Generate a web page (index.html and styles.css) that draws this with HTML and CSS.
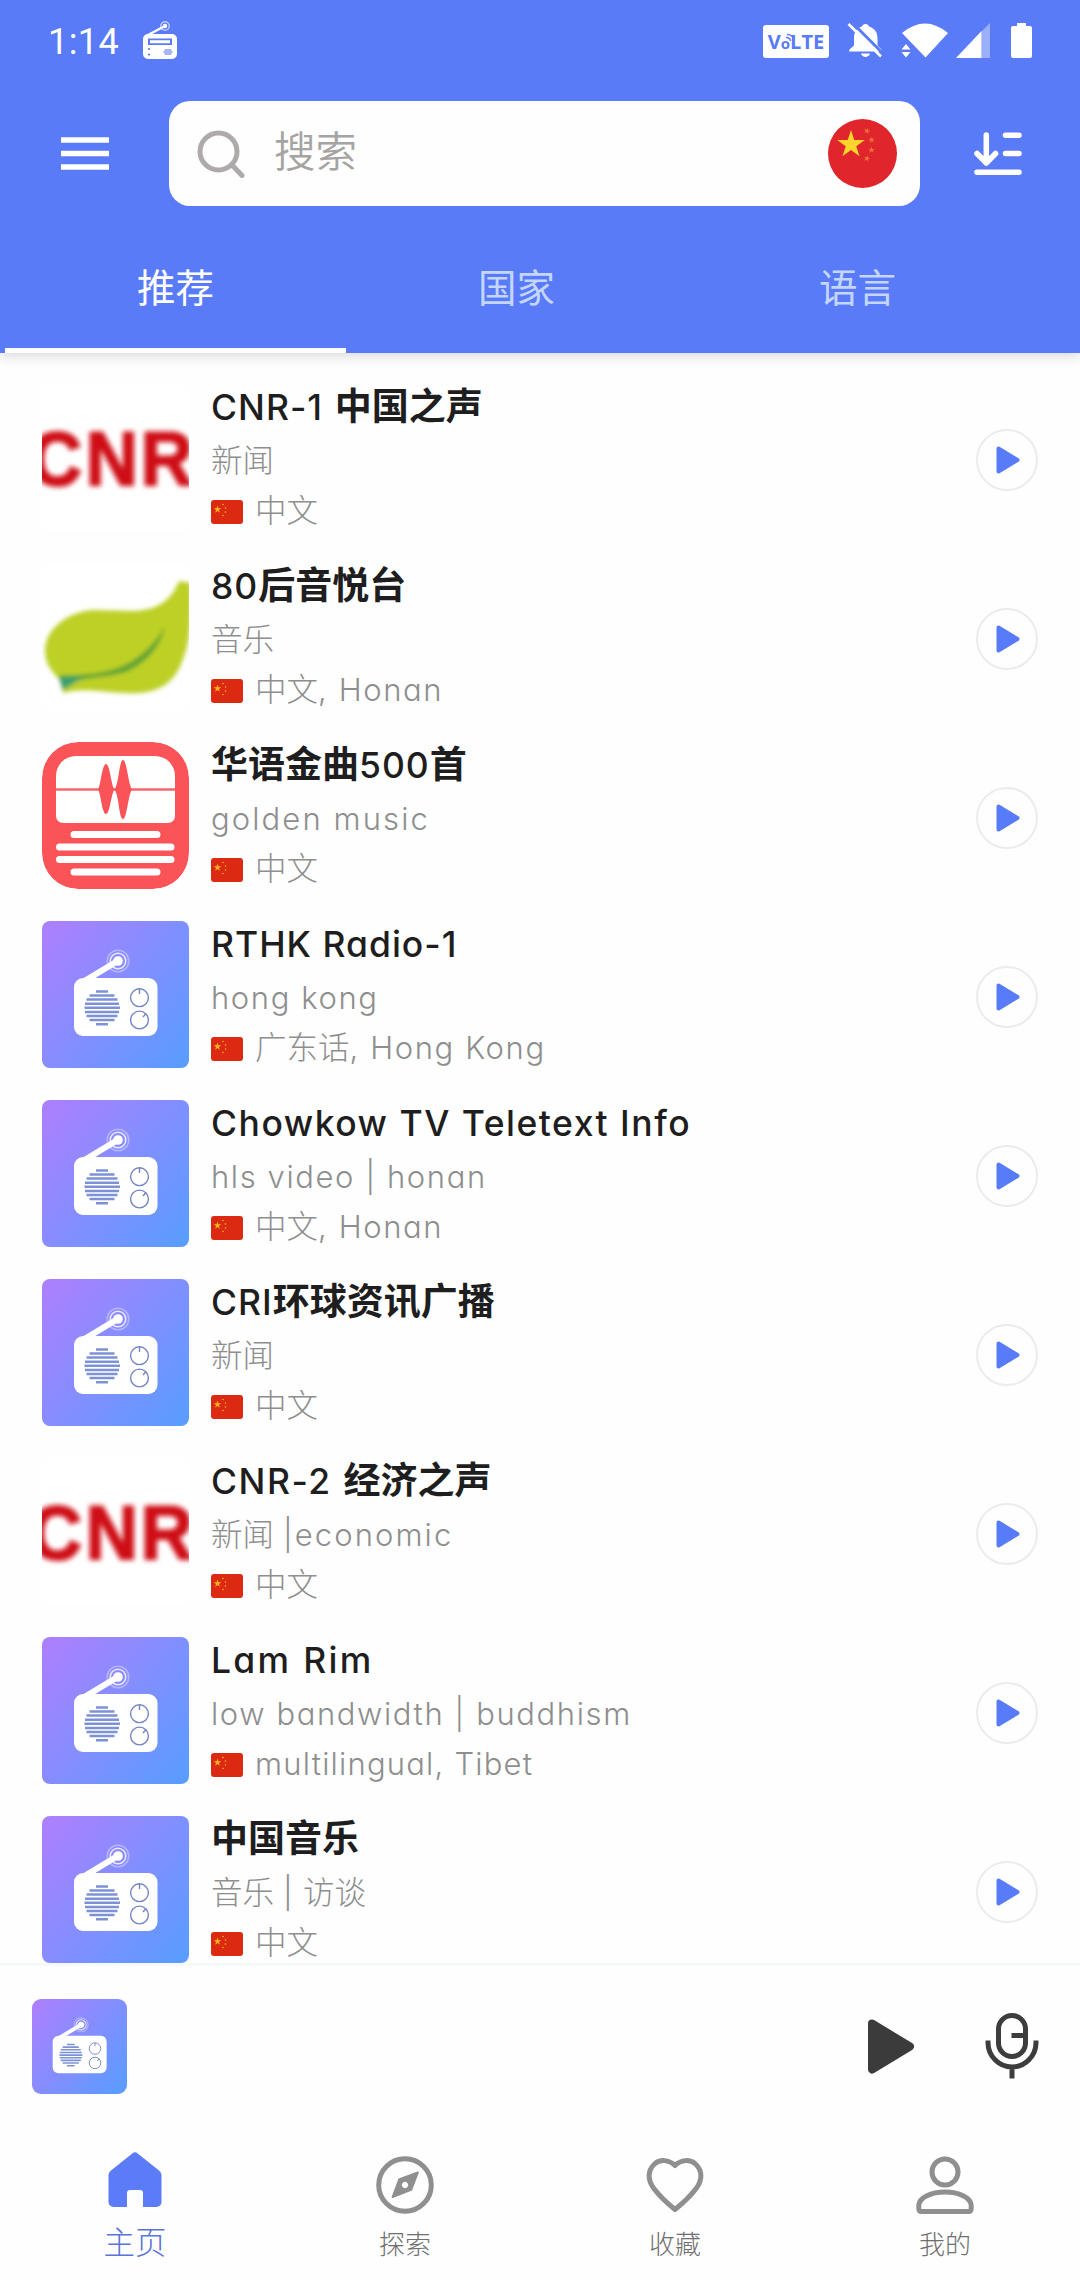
FILE: index.html
```html
<!DOCTYPE html>
<html lang="zh-CN">
<head>
<meta charset="utf-8">
<title>电台</title>
<link rel="stylesheet" href="styles.css">
</head>
<body>
<svg class="defs" aria-hidden="true">
  <defs>
    <linearGradient id="cover" x1="0" y1="0.1" x2="1" y2="0.9">
      <stop offset="0" stop-color="#ab80ff"/>
      <stop offset="1" stop-color="#5b9cff"/>
    </linearGradient>
    <filter id="soft"><feGaussianBlur stdDeviation="2.4"/></filter>
    <filter id="soft-leaf"><feGaussianBlur stdDeviation="2"/></filter>
    <path id="star" d="M0-10 2.25-3.09 9.51-3.09 3.63 1.18 5.88 8.09 0 3.82-5.88 8.09-3.63 1.18-9.51-3.09-2.25-3.09Z"/>
    <symbol id="radio" viewBox="0 0 147 147">
      <rect width="147" height="147" fill="url(#cover)"/>
      <circle cx="76" cy="40" r="10.8" fill="none" stroke="#fff" stroke-opacity=".35" stroke-width="1.6"/>
      <circle cx="76" cy="40" r="7.8" fill="none" stroke="#fff" stroke-opacity=".8" stroke-width="1.6"/>
      <circle cx="76" cy="40" r="4.8" fill="#fff"/>
      <path d="M74 37.5 35 61 50 59 78 42Z" fill="#fff"/>
      <rect x="32" y="57" width="83.5" height="58" rx="9" fill="#fff"/>
      <path d="M54 70.5h12M47.5 74.5h25M44.500 78.600h31M43 82.700h34M42.500 86.800h35.500M43 90.900h34M44.500 95h31M47.500 99.100h25M54 103.200h12" stroke="#7d92d6" stroke-width="2.500"/>
      <g fill="none" stroke="#7584c4" stroke-width="1.400">
        <circle cx="97.500" cy="76.700" r="8.900"/><circle cx="97.500" cy="99" r="8.900"/>
        <path d="M97.500 68v5M104 92.500l-3 3.500"/>
      </g>
    </symbol>
    <symbol id="cnr" viewBox="0 0 147 147">
      <rect width="147" height="147" fill="#fff"/>
      <g filter="url(#soft)"><text class="cnr-text" transform="scale(.95 1)" x="-13 46 104" y="101">CNR</text></g>
    </symbol>
    <symbol id="leaf" viewBox="0 0 147 147">
      <rect width="147" height="147" fill="#fff"/>
      <g filter="url(#soft-leaf)">
        <path d="M137 18C129 38 115 47 92 48L50 47C22 50 3 68 3 88c0 12 6 20 15 29l3 13c22-6 40 0 62 0 34 2 50-10 58-34 8-20 8-40 8-76Z" fill="#bdd026"/>
        <path d="M17 112c30 1 58-2 78-17 12-9 22-20 28-32-4 19-16 33-33 43-20 10-44 6-70 16Z" fill="#5ba236"/>
        <path d="M17 115c9-2 17-1 25-1L21 127Z" fill="#3aa06b"/>
      </g>
    </symbol>
    <symbol id="golden" viewBox="0 0 147 147">
      <rect width="147" height="147" rx="36" fill="#fb5458"/>
      <path d="M34 14h79a20 20 0 0 1 20 20v40a7 7 0 0 1-7 7H21a7 7 0 0 1-7-7V34a20 20 0 0 1 20-20Z" fill="#fff"/>
      <path d="M14 47.500H133" stroke="#f4676c" stroke-width="2.600"/>
      <path d="M56 47.500C59 43 60 22 64 22S69 43 72.500 47.500C69 52 68 72 64 72S59 52 56 47.500ZM72.500 47.500C77 42 77 18 81 18S86 42 90 47.500C86 53 85 77 81 77S77 53 72.500 47.500Z" fill="#fb5458"/>
      <path d="M32 92.500h83M17.500 105h111.500M17.500 117.500h111.500M32 130h83" stroke="#fff" stroke-width="7" stroke-linecap="round"/>
    </symbol>
    <symbol id="flag" viewBox="0 0 32 24">
      <rect width="32" height="24" rx="3" fill="#dc2a12"/>
      <g fill="#ffb61e">
        <use href="#star" transform="translate(6.500 9.500) scale(.4)"/>
        <circle cx="12" cy="4.500" r=".8"/><circle cx="14.500" cy="8" r=".8"/><circle cx="14.500" cy="12" r=".8"/><circle cx="12" cy="15.500" r=".8"/>
      </g>
    </symbol>
    <symbol id="play" viewBox="0 0 24 28">
      <path d="M2.500 2.500 21.500 14 2.500 25.500Z" fill="currentColor" stroke="currentColor" stroke-width="4" stroke-linejoin="round"/>
    </symbol>
  </defs>
</svg>

<div class="app">
  <header class="header">
    <div class="status">
      <span class="clock">1:14</span>
      <svg class="status-radio" width="34" height="39" viewBox="0 0 34 39">
        <circle cx="22" cy="5" r="4.200" fill="none" stroke="#fff" stroke-opacity=".6" stroke-width="1.400"/>
        <circle cx="22" cy="5" r="2.200" fill="#fff"/>
        <path d="M5 14 22 5" stroke="#fff" stroke-width="2.200"/>
        <path fill-rule="evenodd" fill="#fff" d="M5 13h24a5 5 0 0 1 5 5v15a5 5 0 0 1-5 5H5a5 5 0 0 1-5-5V18a5 5 0 0 1 5-5ZM5 17.500v6.500h24v-6.500ZM7 19.300h20v3H7Z"/>
        <circle cx="6" cy="28" r="1.100" fill="#5a7bf8"/><circle cx="6" cy="33.500" r="1.100" fill="#5a7bf8"/>
        <path d="M21.500 29h7M20.500 31h9M21.500 33h7" stroke="#8a9cf4" stroke-width="1.300"/>
      </svg>
      <div class="status-right">
        <span class="volte">V<small>o</small>LTE
          <svg class="volte-waves" width="10" height="9" viewBox="0 0 10 9" fill="none" stroke="#5a7bf8" stroke-width="1.400"><path d="M1 4.500Q4.500 4 5.500 8M2 1.500Q8 1.500 9 7"/></svg>
        </span>
        <svg class="bell" width="37" height="35" viewBox="0 0 37 35">
          <path fill="#fff" d="M18.500 1c2 0 3 1 3.500 2.500 6 2 8.500 6 8.500 12V22c0 2 4.500 3 4.500 6.500H2c0-3.500 5-4.500 5-6.500v-6.500c0-6 2-10 8-12C15.500 2 16.500 1 18.500 1ZM14 30.500h9c-1 4.500-8 4.500-9 0Z"/>
          <path d="M4.500-1 38 32.500" stroke="#5a7bf8" stroke-width="3"/>
          <path d="M1.500 1 34 33.500" stroke="#fff" stroke-width="2.600"/>
        </svg>
        <svg class="wifi" width="48" height="35" viewBox="0 0 48 35">
          <path fill="#fff" d="M1 10Q24-9 47 10L24.500 34.500ZM.500 26.500 5 21l4.500 5.500ZM.500 29h9L5 34.500Z"/>
        </svg>
        <svg class="signal" width="34" height="35" viewBox="0 0 34 35">
          <path fill="#fff" fill-opacity=".4" d="M25.500 8.500 34 0V35H25.500Z"/><path fill="#fff" d="M0 35 25.500 8V35Z"/>
        </svg>
        <svg width="21" height="35" viewBox="0 0 21 35"><path fill="#fff" d="M6 0h9v3h4a2 2 0 0 1 2 2v28a2 2 0 0 1-2 2H2a2 2 0 0 1-2-2V5a2 2 0 0 1 2-2h4Z"/></svg>
      </div>
    </div>

    <div class="toolbar">
      <svg class="menu" width="48" height="33" viewBox="0 0 48 33"><path d="M0 3h48M0 16.500h48M0 30h48" stroke="#fff" stroke-width="5.500"/></svg>
      <div class="search">
        <svg width="48" height="48" viewBox="0 0 48 48" fill="none" stroke="#aeaaaa" stroke-width="5"><circle cx="21.500" cy="21.500" r="18.500"/><path d="M35 35l10 10.500" stroke-linecap="round"/></svg>
        <span class="placeholder">搜索</span>
        <svg class="country" width="69" height="69" viewBox="0 0 69 69">
          <circle cx="34.500" cy="34.500" r="34.500" fill="#e0262c"/>
          <use href="#star" transform="translate(23 25.500) scale(1.450)" fill="#fcd52c"/>
          <g fill="#f0743a"><use href="#star" transform="translate(39 12) rotate(12) scale(.34)"/><use href="#star" transform="translate(43.500 21) rotate(-10) scale(.34)"/><use href="#star" transform="translate(43.500 31) scale(.34)"/><use href="#star" transform="translate(39 39.500) rotate(15) scale(.34)"/></g>
        </svg>
      </div>
      <svg class="sort" width="48" height="44" viewBox="0 0 48 44" fill="none" stroke="#fff" stroke-width="5.500" stroke-linecap="round" stroke-linejoin="round">
        <path d="M12.300 3v28M3 21.500l9.300 9.500 9.300-9.500M31.500 3.200H45M31.500 21.500H45M3 40.200H45"/>
      </svg>
    </div>

    <nav class="tabs">
      <span class="tab tab-active">推荐</span>
      <span class="tab">国家</span>
      <span class="tab">语言</span>
    </nav>
  </header>

  <main class="list">
    <article class="row">
      <svg class="thumb"><use href="#cnr"/></svg>
      <div class="info">
        <h2><span class="latin">CNR-1</span> 中国之声</h2>
        <p>新闻</p>
        <p class="lang"><svg class="flag"><use href="#flag"/></svg>中文</p>
      </div>
      <button class="play"><svg><use href="#play"/></svg></button>
    </article>
    <article class="row">
      <svg class="thumb"><use href="#leaf"/></svg>
      <div class="info">
        <h2><span class="latin">80</span>后音悦台</h2>
        <p>音乐</p>
        <p class="lang"><svg class="flag"><use href="#flag"/></svg>中文<span class="latin">, Honan</span></p>
      </div>
      <button class="play"><svg><use href="#play"/></svg></button>
    </article>
    <article class="row">
      <svg class="thumb thumb-plain"><use href="#golden"/></svg>
      <div class="info">
        <h2>华语金曲<span class="latin">500</span>首</h2>
        <p><span class="latin roomy">golden music</span></p>
        <p class="lang"><svg class="flag"><use href="#flag"/></svg>中文</p>
      </div>
      <button class="play"><svg><use href="#play"/></svg></button>
    </article>
    <article class="row">
      <svg class="thumb"><use href="#radio"/></svg>
      <div class="info">
        <h2><span class="latin">RTHK Radio-1</span></h2>
        <p><span class="latin">hong kong</span></p>
        <p class="lang"><svg class="flag"><use href="#flag"/></svg>广东话<span class="latin">, Hong Kong</span></p>
      </div>
      <button class="play"><svg><use href="#play"/></svg></button>
    </article>
    <article class="row">
      <svg class="thumb"><use href="#radio"/></svg>
      <div class="info">
        <h2><span class="latin wide">Chowkow TV Teletext Info</span></h2>
        <p><span class="latin">hls video | honan</span></p>
        <p class="lang"><svg class="flag"><use href="#flag"/></svg>中文<span class="latin">, Honan</span></p>
      </div>
      <button class="play"><svg><use href="#play"/></svg></button>
    </article>
    <article class="row">
      <svg class="thumb"><use href="#radio"/></svg>
      <div class="info">
        <h2><span class="latin">CRI</span>环球资讯广播</h2>
        <p>新闻</p>
        <p class="lang"><svg class="flag"><use href="#flag"/></svg>中文</p>
      </div>
      <button class="play"><svg><use href="#play"/></svg></button>
    </article>
    <article class="row">
      <svg class="thumb"><use href="#cnr"/></svg>
      <div class="info">
        <h2><span class="latin wide">CNR-2</span> 经济之声</h2>
        <p>新闻 <span class="latin roomy">|economic</span></p>
        <p class="lang"><svg class="flag"><use href="#flag"/></svg>中文</p>
      </div>
      <button class="play"><svg><use href="#play"/></svg></button>
    </article>
    <article class="row">
      <svg class="thumb"><use href="#radio"/></svg>
      <div class="info">
        <h2><span class="latin wider">Lam Rim</span></h2>
        <p><span class="latin">low bandwidth | buddhism</span></p>
        <p class="lang"><svg class="flag"><use href="#flag"/></svg><span class="latin tight">multilingual, Tibet</span></p>
      </div>
      <button class="play"><svg><use href="#play"/></svg></button>
    </article>
    <article class="row">
      <svg class="thumb"><use href="#radio"/></svg>
      <div class="info">
        <h2>中国音乐</h2>
        <p>音乐 <span class="latin">|</span> 访谈</p>
        <p class="lang"><svg class="flag"><use href="#flag"/></svg>中文</p>
      </div>
      <button class="play"><svg><use href="#play"/></svg></button>
    </article>
  </main>

  <section class="player">
    <svg class="player-cover"><use href="#radio"/></svg>
    <svg class="player-play" width="48" height="57"><use href="#play"/></svg>
    <svg class="mic" width="54" height="66" viewBox="0 0 54 66" fill="none" stroke="#3d3d3d" stroke-width="5">
      <rect x="13.500" y="2.500" width="27" height="41" rx="13.500"/>
      <path d="M26.500 22.500H40M3 27.500v2a24 24.500 0 0 0 48 0v-2M27 54v11.500"/>
    </svg>
  </section>

  <nav class="bottom">
    <a class="item item-active">
      <svg width="58" height="58" viewBox="0 0 58 58"><path fill="#5b7cf6" d="M26.300 1.500a4.200 4.200 0 0 1 5.400 0L53 18.500a6 6 0 0 1 2.500 4.500V50a5 5 0 0 1-5 5H37V41a3 3 0 0 0-3-3H24a3 3 0 0 0-3 3V55H7.500a5 5 0 0 1-5-5V23A6 6 0 0 1 5 18.500Z"/></svg>
      <span>主页</span>
    </a>
    <a class="item">
      <svg width="58" height="58" viewBox="0 0 58 58"><circle cx="29" cy="29" r="26.300" fill="none" stroke="#8f8f8f" stroke-width="5"/><path fill="#8f8f8f" fill-rule="evenodd" d="M41.500 15.500a1 1 0 0 1 1.300 1.300L36 34.500 17 42a1 1 0 0 1-1.300-1.300L22.500 22.500ZM29 25.800a3.200 3.200 0 1 0 .01 0Z"/></svg>
      <span>探索</span>
    </a>
    <a class="item">
      <svg width="58" height="58" viewBox="0 0 58 58"><path fill="none" stroke="#8f8f8f" stroke-width="5" stroke-linejoin="round" d="M29 9.500C23 3.500 14 3 8.500 8 1 15 2 24.500 7.500 32 13 39.500 21 47 29 53.500 37 47 45 39.500 50.500 32 56 24.500 57 15 49.500 8 44 3 35 3.500 29 9.500Z"/></svg>
      <span>收藏</span>
    </a>
    <a class="item">
      <svg width="58" height="58" viewBox="0 0 58 58" fill="none" stroke="#8f8f8f" stroke-width="5" stroke-linejoin="round"><circle cx="29" cy="16" r="13"/><path d="M5.500 55.500Q2.800 55.500 2.800 52V49C3.500 41.500 15 36 29 36S54.500 41.500 55.200 49V52Q55.200 55.500 52.500 55.500Z"/></svg>
      <span>我的</span>
    </a>
  </nav>
</div>
</body>
</html>
```
FILE: styles.css
```css
* { box-sizing: border-box; }

body {
  margin: 0;
  background: #fefefe;
  font-family: Inter, "Noto Sans CJK SC", sans-serif;
}

.defs { position: absolute; width: 0; height: 0; }

.app {
  display: flex;
  flex-direction: column;
  width: 1080px;
  height: 2280px;
  overflow: hidden;
}

/* header */
.header {
  display: flex;
  flex-direction: column;
  height: 353px;
  background: #5a7bf8;
  box-shadow: 0 2px 12px rgba(40, 40, 60, .2);
  z-index: 1;
}

.status {
  display: flex;
  align-items: flex-start;
  height: 101px;
  padding: 21px 48px 0;
}

.clock {
  width: 95px;
  color: #fff;
  font: 400 36px/42px Roboto, sans-serif;
  letter-spacing: .4px;
}

.status-right {
  display: flex;
  margin-left: auto;
  padding-top: 2px;
}

.volte {
  position: relative;
  width: 66px;
  height: 33px;
  margin-top: 2px;
  border-radius: 3px;
  background: #fff;
  color: #5a7bf8;
  font: 700 20px/34px "Open Sans", sans-serif;
  text-align: center;
}

.volte small { font-size: 15px; }
.volte-waves { position: absolute; left: 22px; top: 8px; }
.bell { margin: 0 0 0 18px; }
.wifi { margin-left: 17px; }
.signal { margin-left: 7px; }
.signal + svg { margin-left: 21px; }

.toolbar {
  display: flex;
  align-items: center;
  height: 105px;
  padding: 0 58px 0 61px;
}

.search {
  display: flex;
  align-items: center;
  width: 751px;
  height: 105px;
  margin: 0 54px 0 60px;
  padding: 0 23px 0 28px;
  border-radius: 21px;
  background: #fefefe;
}

.placeholder {
  margin: 0 auto 9px 29px;
  color: #a6a3a3;
  font-size: 41.500px;
  font-weight: 350;
}

.tabs {
  display: flex;
  flex: 1;
  padding-left: 5px;
}

.tab {
  width: 341px;
  height: 147px;
  padding-top: 17px;
  border-bottom: 5px solid transparent;
  color: rgba(226, 240, 255, .78);
  font-size: 38.500px;
  line-height: 130px;
  text-align: center;
}

.tab-active { border-color: #fff; color: #fff; }

/* stations */
.list {
  height: 1610px;
  padding-top: 15px;
  overflow: hidden;
}

.row {
  display: flex;
  height: 179px;
  padding: 16px 42px;
}

.thumb { width: 147px; height: 147px; border-radius: 8px; }
.thumb-plain { border-radius: 36px; }

.cnr-text {
  fill: #cf1016;
  stroke: #cf1016;
  stroke-width: 2px;
  font: 700 76px "Liberation Sans", sans-serif;
}

.info {
  flex: 1;
  margin-left: 22px;
  white-space: nowrap;
}

.info h2 {
  margin: 0;
  color: #1e1e20;
  font-size: 37px;
  font-weight: 700;
  line-height: 46px;
  word-spacing: 3px;
}

.info h2 .latin {
  font-size: 35.500px;
  font-weight: 500;
  letter-spacing: 1px;
  word-spacing: 0;
}

.info h2 .wide { letter-spacing: 1.500px; }
.info h2 .wider { letter-spacing: 2.300px; }

.info p {
  margin: 5.500px 0 0;
  color: #8e8e8e;
  font-size: 31.500px;
  font-weight: 300;
  line-height: 50px;
}

.info .lang {
  display: flex;
  align-items: center;
  height: 50px;
  margin: 0;
  white-space: pre;
}

.latin { line-height: 1; font-feature-settings: "cv11"; }

.info p .latin {
  font-size: 31px;
  letter-spacing: 1.600px;
}

.info p .tight { letter-spacing: 1.200px; }
.info p .roomy { letter-spacing: 2.100px; }
.info .lang .latin { line-height: 50px; }
.flag { width: 32px; height: 24px; margin: 3px 12px 0 0; }

.play {
  display: flex;
  align-items: center;
  justify-content: center;
  align-self: flex-start;
  width: 62px;
  height: 62px;
  margin: 45px 0.500px 0 0;
  padding: 0 0 0 2px;
  border: 2px solid #ececee;
  border-radius: 50%;
  background: #fefefe;
  color: #587bf8;
}

.play svg { width: 24px; height: 28px; }

/* player */
.player {
  display: flex;
  align-items: center;
  height: 167px;
  padding: 0 41px 4px 32px;
  border-top: 3px solid #f6f9f9;
}

.player-cover { width: 95px; height: 95px; border-radius: 9px; }
.player-play { margin-left: auto; color: #3b3b3b; }
.mic { margin: 0 0 0 70px; }

/* bottom navigation */
.bottom {
  display: flex;
  flex: 1;
  padding-top: 26px;
}

.item {
  display: flex;
  flex: 1;
  flex-direction: column;
  align-items: center;
  color: #6f6f6f;
  font-size: 26px;
  font-weight: 300;
}

.item span { height: 36px; margin-top: 13px; line-height: 36px; }
.item-active { color: #5b74d8; font-size: 31.500px; }
.item-active svg { margin-top: -4px; }
.item-active span { margin-top: 15px; }
```
